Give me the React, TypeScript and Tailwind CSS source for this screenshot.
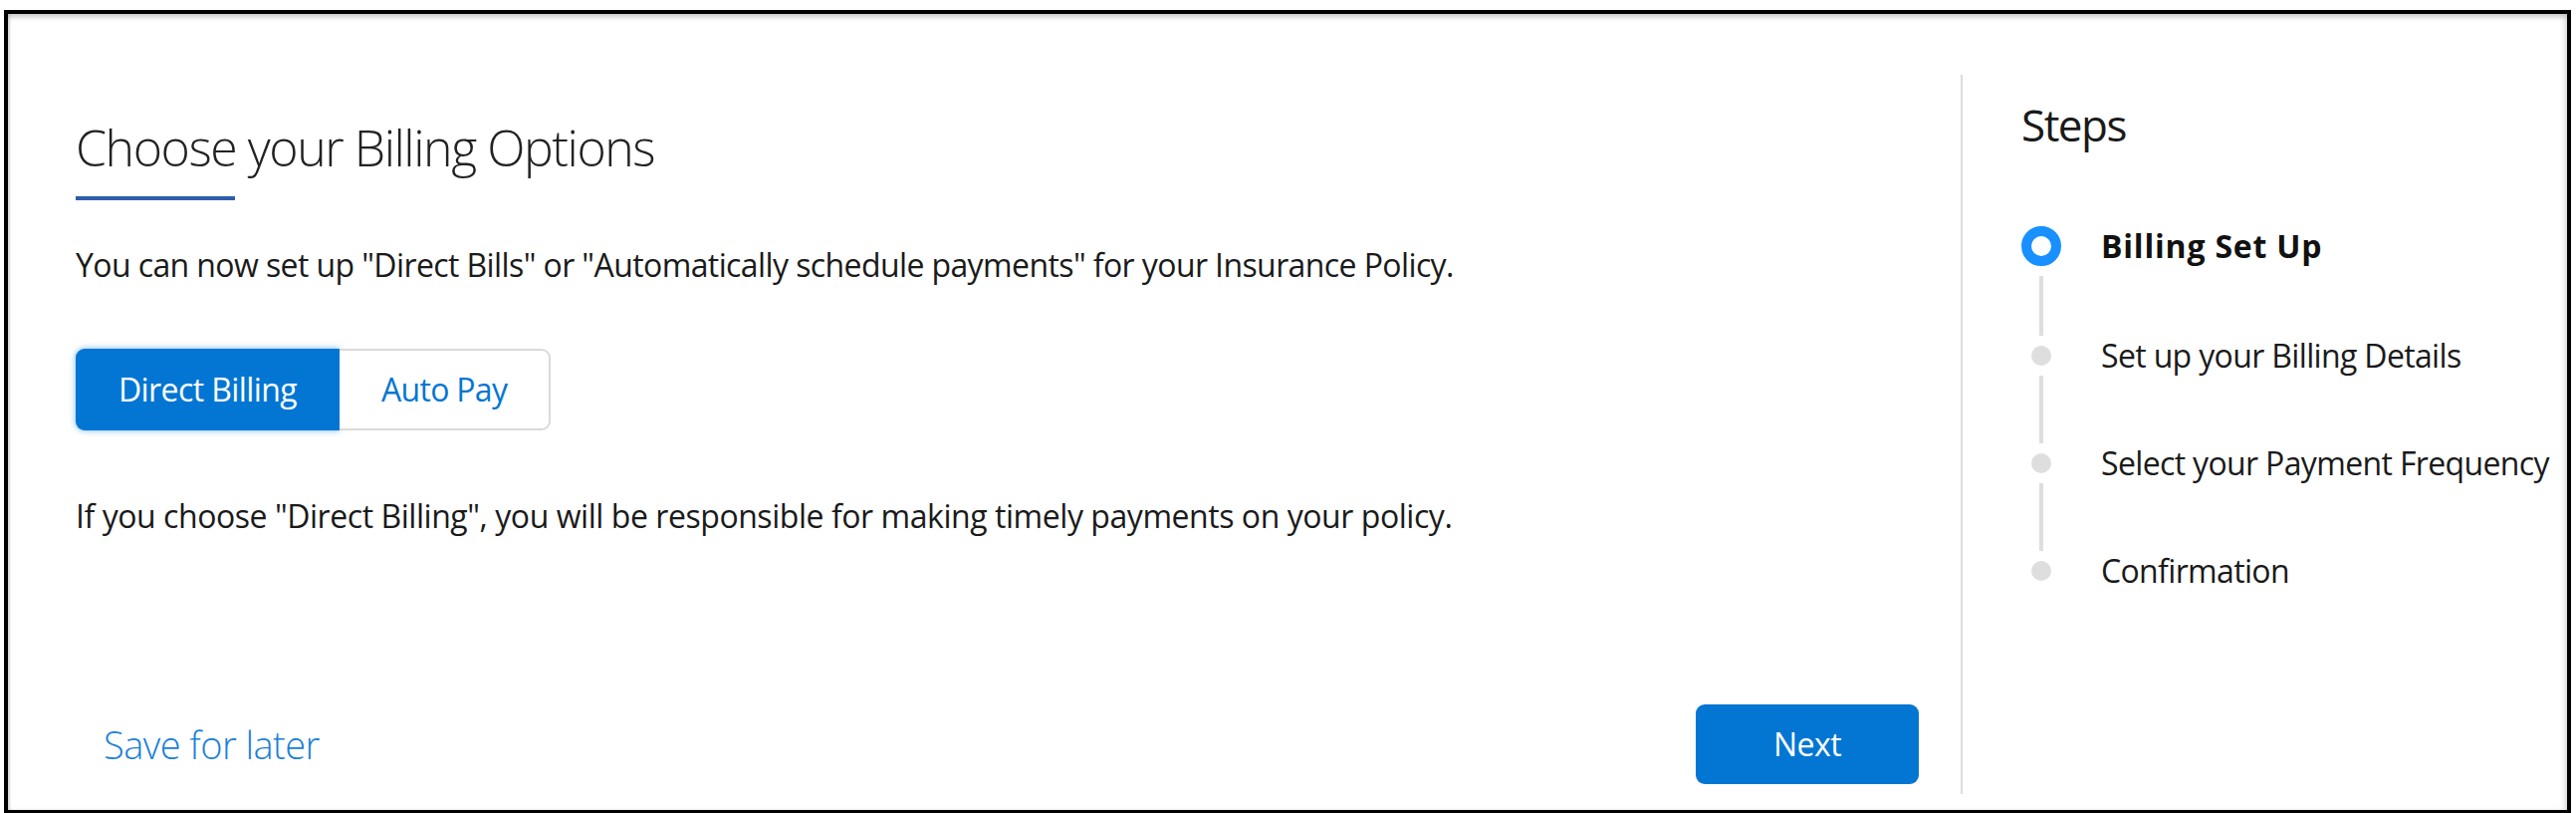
import React from "react";

const steps = [
  { label: "Set up your Billing Details" },
  { label: "Select your Payment Frequency" },
  { label: "Confirmation" },
];

function Connector({ h }: { h: string }) {
  return (
    <div className="flex w-[40px] justify-center py-[10px]">
      <div className={`w-[4px] bg-[#dedede] ${h}`} />
    </div>
  );
}

export default function App() {
  return (
    <div className="min-h-[816px] w-[2587px] overflow-hidden bg-white font-['Open_Sans',sans-serif] text-[#222]">
      <div className="ml-[4px] mt-[10px] flex h-[807px] w-[2578px] border-4 border-black bg-white pb-[16px] pt-[61px] shadow-[inset_0_4px_4px_rgba(0,0,0,0.16),inset_-4px_0_5px_rgba(0,0,0,0.07),inset_2px_0_2px_rgba(0,0,0,0.1)]">
        {/* Left column */}
        <div className="flex w-[1961px] flex-col pl-[68px] pr-[42px]">
          <h1 className="mt-[43px] text-[50px] font-light leading-[60px] tracking-[-1.45px] text-[#222]">
            Choose your Billing Options
          </h1>
          <div className="mt-[19px] h-[4px] w-[160px] bg-[#2c5eaa]" />
          <p className="mt-[45px] text-[32px] leading-[40px] tracking-[-0.6px] text-[#1a1a1a]">
            You can now set up "Direct Bills" or "Automatically schedule payments" for your Insurance Policy.
          </p>
          <div className="mt-[64px] flex h-[82px]">
            <button className="flex h-[82px] items-center rounded-l-[9px] bg-[#0376d3] px-[43px] text-[32px] leading-[40px] tracking-[-0.6px] text-white shadow-[0_0_6px_rgba(3,118,211,0.55)]">
              Direct Billing
            </button>
            <button className="flex h-[82px] items-center rounded-r-[9px] border-2 border-l-0 border-[#dadada] bg-white px-[42px] text-[32px] leading-[40px] tracking-[-0.7px] text-[#0376d3]">
              Auto Pay
            </button>
          </div>
          <p className="mt-[66px] text-[32px] leading-[40px] tracking-[-0.45px] text-[#1a1a1a]">
            If you choose "Direct Billing", you will be responsible for making timely payments on your policy.
          </p>
          <div className="mt-auto flex items-center justify-between pb-[10px]">
            <a className="pl-[28px] text-[38px] font-light leading-[40px] tracking-[-0.55px] text-[#1a80d8]">
              Save for later
            </a>
            <button className="flex h-[80px] w-[224px] items-center justify-center rounded-[9px] bg-[#0376d3] text-[32px] leading-[40px] tracking-[-0.5px] text-white">
              Next
            </button>
          </div>
        </div>

        {/* Right column */}
        <div className="flex flex-1 flex-col border-l-2 border-[#dcdcdc] pl-[59px]">
          <h2 className="mt-[24px] text-[44px] leading-[52px] tracking-[-1.5px] text-[#1a1a1a]">Steps</h2>
          <div className="mt-[76px] flex flex-col">
            <div className="flex h-[40px] items-center">
              <div className="flex w-[40px] justify-center">
                <div className="h-[40px] w-[40px] rounded-full border-[10px] border-[#1890ff] bg-white" />
              </div>
              <span className="ml-[40px] text-[32px] font-bold leading-[40px] tracking-[0.8px] text-[#111]">
                Billing Set Up
              </span>
            </div>
            <Connector h="h-[60px]" />
            {steps.map((s, i) => (
              <React.Fragment key={s.label}>
                <div className="flex h-[20px] items-center">
                  <div className="flex w-[40px] justify-center">
                    <div className="h-[20px] w-[20px] rounded-full bg-[#dedede]" />
                  </div>
                  <span className="ml-[40px] whitespace-nowrap text-[32px] leading-[40px] tracking-[-0.65px] text-[#1a1a1a]">
                    {s.label}
                  </span>
                </div>
                {i < steps.length - 1 && <Connector h="h-[68px]" />}
              </React.Fragment>
            ))}
          </div>
        </div>
      </div>
    </div>
  );
}
